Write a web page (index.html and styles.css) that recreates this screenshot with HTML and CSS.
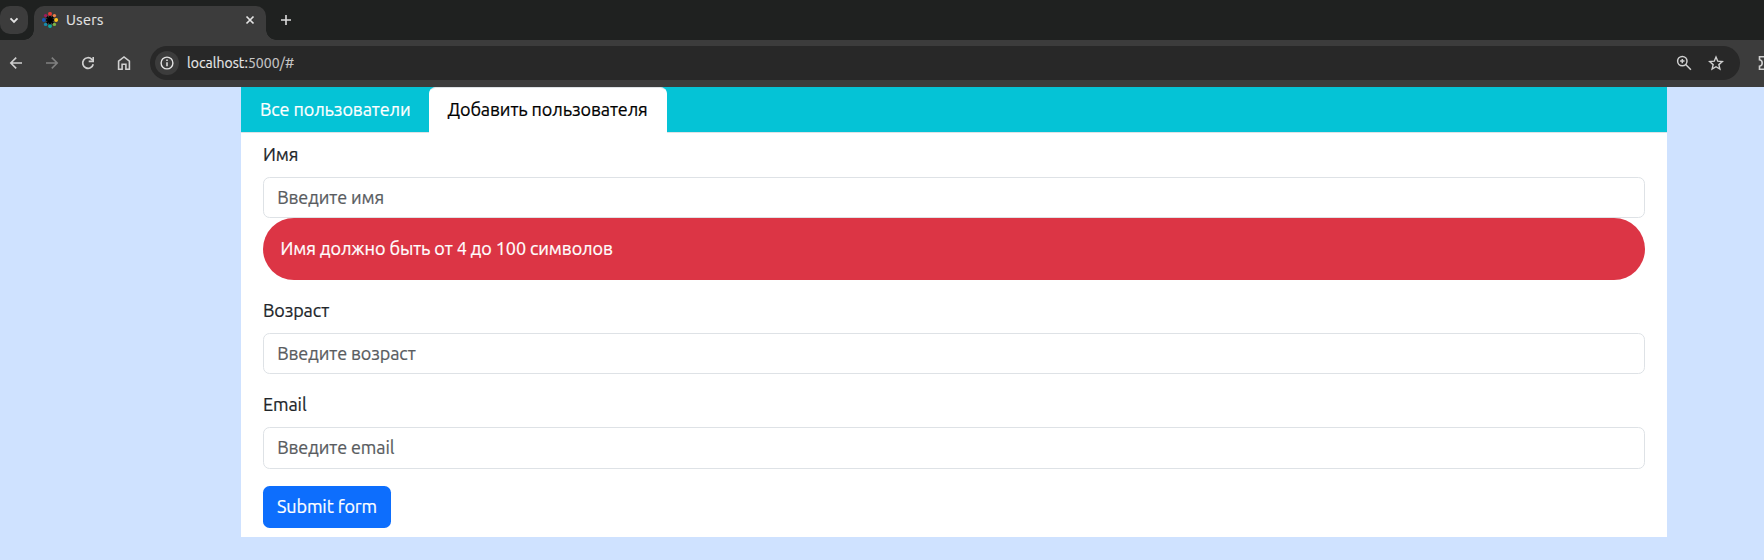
FILE: index.html
```html
<!DOCTYPE html>
<html lang="ru">
<head>
<meta charset="utf-8">
<title>Users</title>
<link rel="stylesheet" href="styles.css">
</head>
<body>
<header class="browser">
  <div class="tabstrip">
    <div class="tab-search"><svg width="28" height="28" viewBox="0 0 28 28"><path d="M10.5 12.3 14 15.8 17.5 12.3" fill="none" stroke="#e3e3e3" stroke-width="1.9"/></svg></div>
    <div class="tab">
      <svg class="favicon" width="16" height="16" viewBox="0 0 16 16">
        <circle cx="8" cy="8" r="2.5" fill="#000"/>
        <g stroke="#000" stroke-width="1.7" stroke-linecap="round"><path d="M8 4.2v7.6M4.2 8h7.6M5.2 5.2l5.6 5.6M10.800 5.200l-5.600 5.600"/></g>
        <circle cx="8" cy="1.900" r="1.950" fill="#e53935"/>
        <circle cx="12.400" cy="3.600" r="1.700" fill="#f08049"/>
        <circle cx="14.100" cy="8" r="1.950" fill="#fcc21b"/>
        <circle cx="12.400" cy="12.400" r="1.700" fill="#7cb342"/>
        <circle cx="8" cy="14.100" r="1.950" fill="#0fa89d"/>
        <circle cx="3.600" cy="12.400" r="1.700" fill="#168cae"/>
        <circle cx="1.900" cy="8" r="1.950" fill="#1557b8"/>
        <circle cx="3.600" cy="3.600" r="1.700" fill="#a3195b"/>
      </svg>
      <span class="tab-title">Users</span>
      <svg class="tab-close" width="10" height="10" viewBox="0 0 10 10"><path d="M1.500 1.500l7 7M8.500 1.500l-7 7" stroke="#e3e3e3" stroke-width="1.700"/></svg>
    </div>
    <svg class="new-tab" width="12" height="12" viewBox="0 0 12 12"><path d="M6 1v10M1 6h10" stroke="#dcdcdc" stroke-width="1.600"/></svg>
  </div>
  <div class="toolbar">
    <svg class="nav-icon" width="16" height="16" viewBox="0 0 16 16"><path d="M14 8H3M8.200 2.600 2.800 8l5.400 5.400" fill="none" stroke="#d0d0d0" stroke-width="1.600"/></svg>
    <svg class="nav-icon" width="16" height="16" viewBox="0 0 16 16"><path d="M2 8h11M7.800 2.600 13.200 8l-5.400 5.400" fill="none" stroke="#808080" stroke-width="1.600"/></svg>
    <svg class="nav-icon" width="16" height="16" viewBox="0 0 16 16"><path d="M13.200 9.200A5.300 5.300 0 1 1 11.800 4.300L13 5.500" fill="none" stroke="#d0d0d0" stroke-width="1.700"/><path d="M13.200 1.900v4.500H8.700" fill="none" stroke="#d0d0d0" stroke-width="1.600"/></svg>
    <svg class="nav-icon" width="16" height="16" viewBox="0 0 16 16"><path d="M2.600 6.200 8 1.900l5.400 4.300v8.100H9.900V9.200H6.100v5.100H2.600z" fill="none" stroke="#d0d0d0" stroke-width="1.600"/></svg>
    <div class="omnibox">
      <div class="site-info"><svg width="14" height="14" viewBox="0 0 14 14"><circle cx="7" cy="7" r="5.900" fill="none" stroke="#e3e3e3" stroke-width="1.400"/><path d="M7 6.300v4M7 3.600v1.500" stroke="#e3e3e3" stroke-width="1.500"/></svg></div>
      <span class="url">localhost:<span class="url-rest">5000/#</span></span>
      <svg class="zoom" width="16" height="16" viewBox="0 0 16 16"><circle cx="6.300" cy="6.100" r="4.700" fill="none" stroke="#d0d0d0" stroke-width="1.500"/><path d="M9.700 9.500l5.200 5.200M6.300 3.900v4.400M4.100 6.100h4.400" stroke="#d0d0d0" stroke-width="1.500"/></svg>
      <svg class="star" width="16" height="16" viewBox="0 0 16 16"><path d="M8 2l1.750 4.200 4.550.4-3.450 3 1.050 4.400L8 11.700l-3.900 2.300 1.050-4.400-3.450-3 4.550-.4z" fill="none" stroke="#d0d0d0" stroke-width="1.400"/></svg>
    </div>
    <svg class="extensions" width="16" height="16" viewBox="0 0 16 16"><path d="M1.500 1.800h12.500v12.400H1.500v-3c3.600-.4 3.600-6 0-6.400z" fill="none" stroke="#d0d0d0" stroke-width="1.600"/></svg>
  </div>
</header>
<main class="page">
  <div class="container">
    <nav class="nav-tabs">
      <a class="nav-link all">Все пользователи</a>
      <a class="nav-link active">Добавить пользователя</a>
    </nav>
    <form class="form">
      <div class="field">
        <label class="label" for="name">Имя</label>
        <input class="control" id="name" placeholder="Введите имя">
        <div class="alert">Имя должно быть от 4 до 100 символов</div>
      </div>
      <div class="field">
        <label class="label" for="age">Возраст</label>
        <input class="control" id="age" placeholder="Введите возраст">
      </div>
      <div class="field">
        <label class="label" for="email">Email</label>
        <input class="control" id="email" placeholder="Введите email">
      </div>
      <button class="submit" type="button">Submit form</button>
    </form>
  </div>
</main>
</body>
</html>
```
FILE: styles.css
```css
* { box-sizing: border-box; }
body {
  margin: 0;
  height: 560px;
  overflow: hidden;
  background: #cfe2ff;
  color: #212529;
  font: 18px/26.400px Ubuntu, "Noto Sans", sans-serif;
  letter-spacing: -0.090px;
  -webkit-text-stroke: 0.220px currentColor;
}
svg { display: block; flex: none; }
.browser { height: 87px; background: #3c3c3c; overflow: hidden; letter-spacing: 0; -webkit-text-stroke-width: 0.150px; }
.tabstrip { display: flex; height: 40px; background: #1f2120; }
.tab-search { width: 28px; height: 28px; margin-top: 6px; border-radius: 10px; background: #3c3c3c; }
.tab {
  position: relative;
  display: flex;
  align-items: center;
  width: 232px;
  height: 34px;
  margin: 6px 0 0 6px;
  padding: 0 11px 6px 8px;
  border-radius: 10px 10px 0 0;
  background: #3c3c3c;
}
.tab::before, .tab::after {
  content: "";
  position: absolute;
  bottom: 0;
  width: 10px;
  height: 10px;
}
.tab::before { left: -10px; background: radial-gradient(circle at 0 0, transparent 9.500px, #3c3c3c 10px); }
.tab::after { right: -10px; background: radial-gradient(circle at 100% 0, transparent 9.500px, #3c3c3c 10px); }
.tab-title { margin-left: 8px; color: #e3e3e3; font-size: 14.500px; line-height: 20px; letter-spacing: 0.350px; }
.tab-close { margin-left: auto; }
.new-tab { margin: 14px 0 0 14px; }
.toolbar { display: flex; align-items: center; gap: 20px; height: 47px; padding: 0 0 1px 8px; }
.omnibox {
  display: flex;
  align-items: center;
  width: 1590px;
  height: 34px;
  margin-left: -2px;
  padding: 0 16px 0 5px;
  flex: none;
  border-radius: 17px;
  background: #282828;
}
.site-info { display: grid; place-items: center; width: 24px; height: 24px; border-radius: 50%; background: #3c3c3c; }
.url { margin-left: 8px; color: #e8e8e8; font-size: 14px; line-height: 20px; letter-spacing: 0.050px; }
.url-rest { color: #c7c7c7; }
.zoom { margin-left: auto; }
.star { margin-left: 16px; }
.extensions { margin-left: -2px; }
.container { width: 1426px; height: 450px; margin-left: 241px; background: #fff; }
.nav-tabs { display: flex; height: 46px; border-bottom: 1px solid #dee2e6; background: #05c3d6; }
.nav-link { height: 46px; padding: 9px 0 0 19px; color: #fff; white-space: nowrap; }
.all { width: 188px; height: 45px; }
.active {
  width: 238px;
  padding: 8px 0 0 17.500px;
  border: 1px solid #dee2e6;
  border-color: #dee2e6 #fff #fff;
  border-radius: 6.600px 6.600px 0 0;
  background: #fff;
  color: #000;
}
.form { padding: 8px 22px 0; }
.field { margin-bottom: 16.600px; }
.label { display: block; padding-bottom: 9.600px; }
.field + .field .label { padding-bottom: 9.800px; }
.control {
  display: block;
  width: 100%;
  height: 41.400px;
  padding: 0 13.200px 1.600px;
  border: 1px solid #dee2e6;
  border-radius: 6.600px;
  background: #fff;
  font: inherit;
  letter-spacing: inherit;
}
.control::placeholder { color: #595c5f; opacity: 1; }
.alert { height: 61.800px; padding: 16.600px 17.600px; border-radius: 31px; background: #dc3545; color: #fff; }
.submit {
  display: block;
  width: 128px;
  height: 42px;
  margin-top: 17.600px;
  padding: 0 0 2px;
  border: 0;
  border-radius: 6.600px;
  background: #0d6efd;
  color: #fff;
  font: inherit;
  letter-spacing: inherit;
}
```
